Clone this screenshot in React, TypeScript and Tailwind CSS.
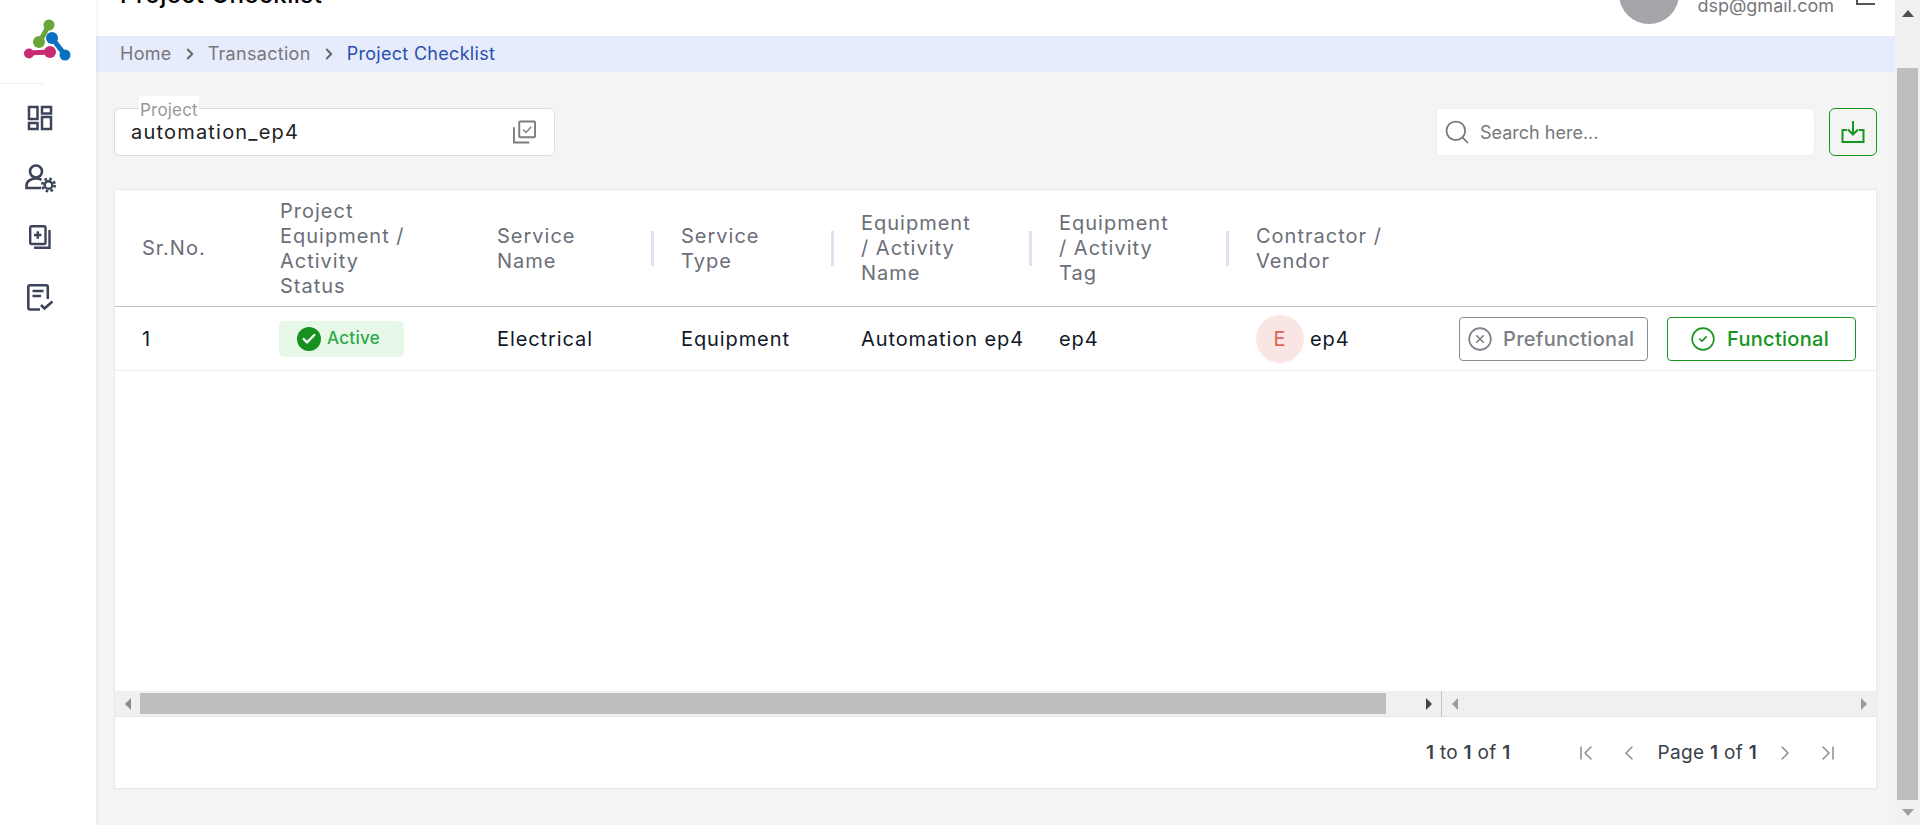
import { Check, ChevronFirst, ChevronLast, ChevronLeft, ChevronRight, CircleCheck, CircleX, Search } from 'lucide-react';

const headFont = "font-['Inter',sans-serif]";

const Logo = () => (
  <svg width="48" height="44" viewBox="0 0 48 44" fill="none" strokeLinecap="round">
    <path d="M25 6 L15 24" stroke="#6aa53a" strokeWidth="5" />
    <circle cx="25" cy="6" r="5.5" fill="#6aa53a" />
    <circle cx="15" cy="23" r="6" fill="#6aa53a" />
    <path d="M4 34 L26 33" stroke="#c92a72" strokeWidth="5" />
    <circle cx="5" cy="34.5" r="5" fill="#c92a72" />
    <circle cx="26" cy="33" r="6" fill="#c92a72" />
    <path d="M28 19 L41 36" stroke="#0a70c0" strokeWidth="5" />
    <circle cx="28" cy="19" r="6" fill="#0a70c0" />
    <circle cx="41" cy="36" r="5.5" fill="#0a70c0" />
  </svg>
);

const DashIcon = () => (
  <svg width="26" height="26" viewBox="0 0 26 26" fill="none" stroke="#3c4459" strokeWidth="2.5">
    <rect x="2" y="2" width="8.5" height="12" />
    <rect x="2" y="18" width="8.5" height="6" />
    <rect x="15" y="2" width="9" height="6.5" />
    <rect x="15" y="12" width="9" height="12" />
  </svg>
);

const UserGearIcon = () => (
  <svg width="32" height="30" viewBox="0 0 32 30" fill="none" stroke="#3c4459" strokeWidth="2.6">
    <circle cx="11" cy="7.5" r="6" />
    <path d="M16 24 H1.5 V21.5 C1.5 17 6 14.5 11 14.5 C13.5 14.5 15 15 16.5 15.8" />
    <circle cx="23.5" cy="21" r="3.8" strokeWidth="2.4" />
    <circle cx="23.5" cy="21" r="6.2" strokeWidth="2.6" strokeDasharray="2.6 2.27" />
  </svg>
);

const AddDocIcon = () => (
  <svg width="22" height="24" viewBox="0 0 22 24" fill="none" stroke="#3c4459" strokeWidth="2.4">
    <rect x="1.2" y="1.2" width="15.3" height="17.8" rx="1.5" />
    <path d="M20.5 5 V22.8 H5" />
    <path d="M5 10 H12.5 M8.8 6.2 V13.8" strokeWidth="2.4" />
  </svg>
);

const ListCheckIcon = () => (
  <svg width="27" height="27" viewBox="0 0 27 27" fill="none" stroke="#3c4459" strokeWidth="2.6">
    <path d="M13 25.5 H3 C1.8 25.5 1.3 24.7 1.3 23.5 V3 C1.3 1.8 1.8 1.3 3 1.3 H19 C20.2 1.3 20.8 1.8 20.8 3 V15" />
    <path d="M5.5 7 H16.5 M5.5 12 H14" />
    <path d="M14 21 L17.5 24.5 L25.5 17.5" />
  </svg>
);

const CheckStackIcon = () => (
  <svg width="23" height="24" viewBox="0 0 24 24" fill="none" stroke="#7d7d7d" strokeWidth="2">
    <rect x="6.5" y="1" width="16.5" height="16.5" rx="1" />
    <path d="M1 7 V23 H17" />
    <path d="M10.5 9.5 L13.5 12.5 L19 6.5" strokeWidth="1.5" />
  </svg>
);

const DownloadIcon = () => (
  <svg width="24" height="24" viewBox="0 0 24 24" fill="none" stroke="#16951f" strokeWidth="2">
    <path d="M12 1 V14 M7 9.5 L12 14.5 L17 9.5" />
    <path d="M6 10 H1.5 V22 H22.5 V10 H18" />
  </svg>
);

const Arrow = ({ dir, color }: { dir: 'up' | 'down' | 'left' | 'right'; color: string }) => {
  const points = {
    up: '0,8 6,1 12,8',
    down: '0,1 6,8 12,1',
    left: '7,0 1,6 7,12',
    right: '1,0 7,6 1,12',
  }[dir];
  const vertical = dir === 'up' || dir === 'down';
  return (
    <svg width={vertical ? 12 : 8} height={vertical ? 9 : 12} fill={color}>
      <polygon points={points} />
    </svg>
  );
};

const Separator = () => <span className="h-[35px] w-[3px] bg-[#dde2ee]" />;

const headers = [
  { w: 'w-[138px]', label: ['Sr.No.'] },
  { w: 'w-[217px]', label: ['Project', 'Equipment /', 'Activity', 'Status'] },
  { w: 'w-[184px]', label: ['Service', 'Name'], sep: true },
  { w: 'w-[180px]', label: ['Service', 'Type'], sep: true },
  { w: 'w-[198px]', label: ['Equipment', '/ Activity', 'Name'], sep: true },
  { w: 'w-[197px]', label: ['Equipment', '/ Activity', 'Tag'], sep: true },
  { w: 'w-[200px]', label: ['Contractor /', 'Vendor'] },
];

export default function App() {
  return (
    <div className={`flex h-[825px] w-[1920px] overflow-hidden bg-[#f4f4f4] ${headFont}`}>
      <aside className="z-10 flex w-24 shrink-0 flex-col bg-white shadow-[1px_0_4px_rgba(0,0,0,0.06)]">
        <div className="mr-[53px] h-[84px] border-b border-[#eeeeee]">
          <div className="ml-[24px] w-[48px] pt-[19px]">
            <Logo />
          </div>
        </div>
        <nav className="flex flex-col items-center pr-[16px]">
          <div className="mt-[21px]"><DashIcon /></div>
          <div className="ml-[2px] mt-[33px]"><UserGearIcon /></div>
          <div className="mt-[31px]"><AddDocIcon /></div>
          <div className="mt-[35px]"><ListCheckIcon /></div>
        </nav>
      </aside>

      <main className="flex min-w-0 flex-1 flex-col">
        <header className="flex h-9 items-start justify-between overflow-hidden bg-white pl-6 pr-[20px]">
          <h1 className="-mt-[23px] text-[24px] font-medium leading-[36px] tracking-[0.5px] text-black">Project Checklist</h1>
          <div className="-mt-[36px] flex items-start">
            <div className="h-[60px] w-[60px] rounded-full bg-[#a5a5aa]" />
            <div className="ml-[18px] mt-[32px] text-[18px] leading-[20px] text-[#77777c]">dsp@gmail.com</div>
            <div className="ml-[22px] mt-[36px] h-[5px] w-[19px] border-b-2 border-l-2 border-[#55555a]" />
          </div>
        </header>

        <div className="flex h-9 items-center bg-[#e6ecfb] pb-[1px] pl-6 text-[18px] tracking-[0.3px] text-[#77777c]">
          <span>Home</span>
          <ChevronRight className="mx-[9px] h-[18px] w-[18px] text-[#666666]" strokeWidth={2.5} />
          <span>Transaction</span>
          <ChevronRight className="mx-[9px] h-[18px] w-[18px] text-[#666666]" strokeWidth={2.5} />
          <span className="text-[#2a4fb0]">Project Checklist</span>
        </div>

        <section className="flex flex-1 flex-col pl-[18px] pr-[18px]">
          <div className="mt-9 flex items-start justify-between">
            <div className="relative flex h-[48px] w-[441px] items-center justify-between rounded-[5px] border border-[#dddddd] bg-white pl-4 pr-[18px]">
              <span className="absolute -top-[13px] left-[24px] bg-white px-[1px] pt-[2px] text-[17px] leading-[24px] tracking-[0.2px] text-[#999999]">Project</span>
              <span className="text-[20px] tracking-[1.2px] text-[#222222]">automation_ep4</span>
              <CheckStackIcon />
            </div>
            <div className="flex items-start gap-[14px]">
              <div className="flex h-[48px] w-[379px] items-center rounded-[5px] border border-[#efefef] bg-white pl-[6px]">
                <Search className="h-7 w-7 text-[#77777c]" strokeWidth={1.5} />
                <span className="ml-[9px] text-[18px] text-[#77777c]">Search here...</span>
              </div>
              <div className="flex h-[48px] w-[48px] items-center justify-center rounded-[6px] border border-[#16951f]">
                <DownloadIcon />
              </div>
            </div>
          </div>

          <div className="mt-[33px] flex h-[600px] flex-col border border-[#e8e8e8] bg-white">
            <div className="flex h-[117px] shrink-0 border-b border-[#bcc2cc] pt-[1px] text-[20px] leading-[25px] tracking-[1px] text-[#6b6e78]">
              {headers.map((h) => (
                <div key={h.label.join(' ')} className={`flex items-center justify-between pl-[27px] ${h.w}`}>
                  <div className="whitespace-nowrap">
                    {h.label.map((line) => (
                      <div key={line}>{line}</div>
                    ))}
                  </div>
                  {h.sep ? <Separator /> : null}
                </div>
              ))}
            </div>

            <div className="flex h-[64px] shrink-0 items-center border-b border-[#eeeeee] text-[20px] tracking-[0.9px] text-[#101828]">
              <div className="w-[138px] pl-[27px]">1</div>
              <div className="w-[217px] pl-[26px]">
                <div className="flex h-[36px] w-[125px] items-center rounded-[5px] bg-[#e8f8e8] pl-[18px]">
                  <span className="flex h-6 w-6 items-center justify-center rounded-full bg-[#16911f]">
                    <Check className="h-4 w-4 text-white" strokeWidth={3.5} />
                  </span>
                  <span className="ml-[6px] text-[17px] font-medium tracking-[0.3px] text-[#2fa84f]">Active</span>
                </div>
              </div>
              <div className="w-[184px] pl-[27px]">Electrical</div>
              <div className="w-[180px] pl-[27px]">Equipment</div>
              <div className="w-[198px] whitespace-nowrap pl-[27px]">Automation ep4</div>
              <div className="w-[197px] pl-[27px]">ep4</div>
              <div className="flex w-[230px] items-center pl-[27px]">
                <span className="flex h-12 w-12 items-center justify-center rounded-full bg-[#f9e6e4] text-[#e0625a]">E</span>
                <span className="ml-[6px]">ep4</span>
              </div>
              <button className="flex h-[44px] w-[189px] items-center rounded-[4px] border-[1.5px] border-[#8a8d96] pl-[7px] text-[20px] font-medium tracking-[0.3px] text-[#7b7e86]">
                <CircleX className="h-[26px] w-[26px]" strokeWidth={1.5} />
                <span className="ml-[10px]">Prefunctional</span>
              </button>
              <button className="ml-[19px] flex h-[44px] w-[189px] items-center rounded-[4px] border-[1.5px] border-[#16951f] pl-[22px] text-[20px] font-medium tracking-[0.3px] text-[#16951f]">
                <CircleCheck className="h-[26px] w-[26px]" strokeWidth={1.5} />
                <span className="ml-[11px]">Functional</span>
              </button>
            </div>

            <div className="flex-1" />

            <div className="flex h-[26px] shrink-0 items-center border-b border-[#e4e4e4] bg-[#f0f0f0]">
              <div className="flex w-[25px] justify-center pl-[1px]"><Arrow dir="left" color="#8a8a8a" /></div>
              <div className="h-[21px] w-[1246px] bg-[#bebebe]" />
              <div className="flex w-[55px] items-center justify-end pr-[8px]"><Arrow dir="right" color="#444444" /></div>
              <div className="h-[26px] w-px bg-[#c4c4c8]" />
              <div className="flex flex-1 items-center justify-between pl-[9px] pr-[8px]">
                <Arrow dir="left" color="#9a9a9a" />
                <Arrow dir="right" color="#9a9a9a" />
              </div>
            </div>

            <div className="flex h-[71px] shrink-0 items-center justify-end pr-[36px] pt-[1px] text-[19px] tracking-[0.3px] text-[#3a3f4a]">
              <span>
                <b className="font-semibold">1</b> to <b className="font-semibold">1</b> of <b className="font-semibold">1</b>
              </span>
              <ChevronFirst className="ml-[63px] h-6 w-6 text-[#8a8d96]" strokeWidth={1.5} />
              <ChevronLeft className="ml-[19px] h-6 w-6 text-[#8a8d96]" strokeWidth={1.5} />
              <span className="ml-[17px]">
                Page <b className="font-semibold">1</b> of <b className="font-semibold">1</b>
              </span>
              <ChevronRight className="ml-[16px] h-6 w-6 text-[#8a8d96]" strokeWidth={1.5} />
              <ChevronLast className="ml-[19px] h-6 w-6 text-[#8a8d96]" strokeWidth={1.5} />
            </div>
          </div>
        </section>
      </main>

      <div className="flex w-[25px] shrink-0 flex-col items-center bg-[#f1f1f1]">
        <div className="flex h-[68px] w-full items-start justify-center pt-[9px]">
          <Arrow dir="up" color="#505050" />
        </div>
        <div className="h-[732px] w-[21px] bg-[#bebebe]" />
        <div className="flex flex-1 items-center justify-center">
          <Arrow dir="down" color="#a0a0a0" />
        </div>
      </div>
    </div>
  );
}
